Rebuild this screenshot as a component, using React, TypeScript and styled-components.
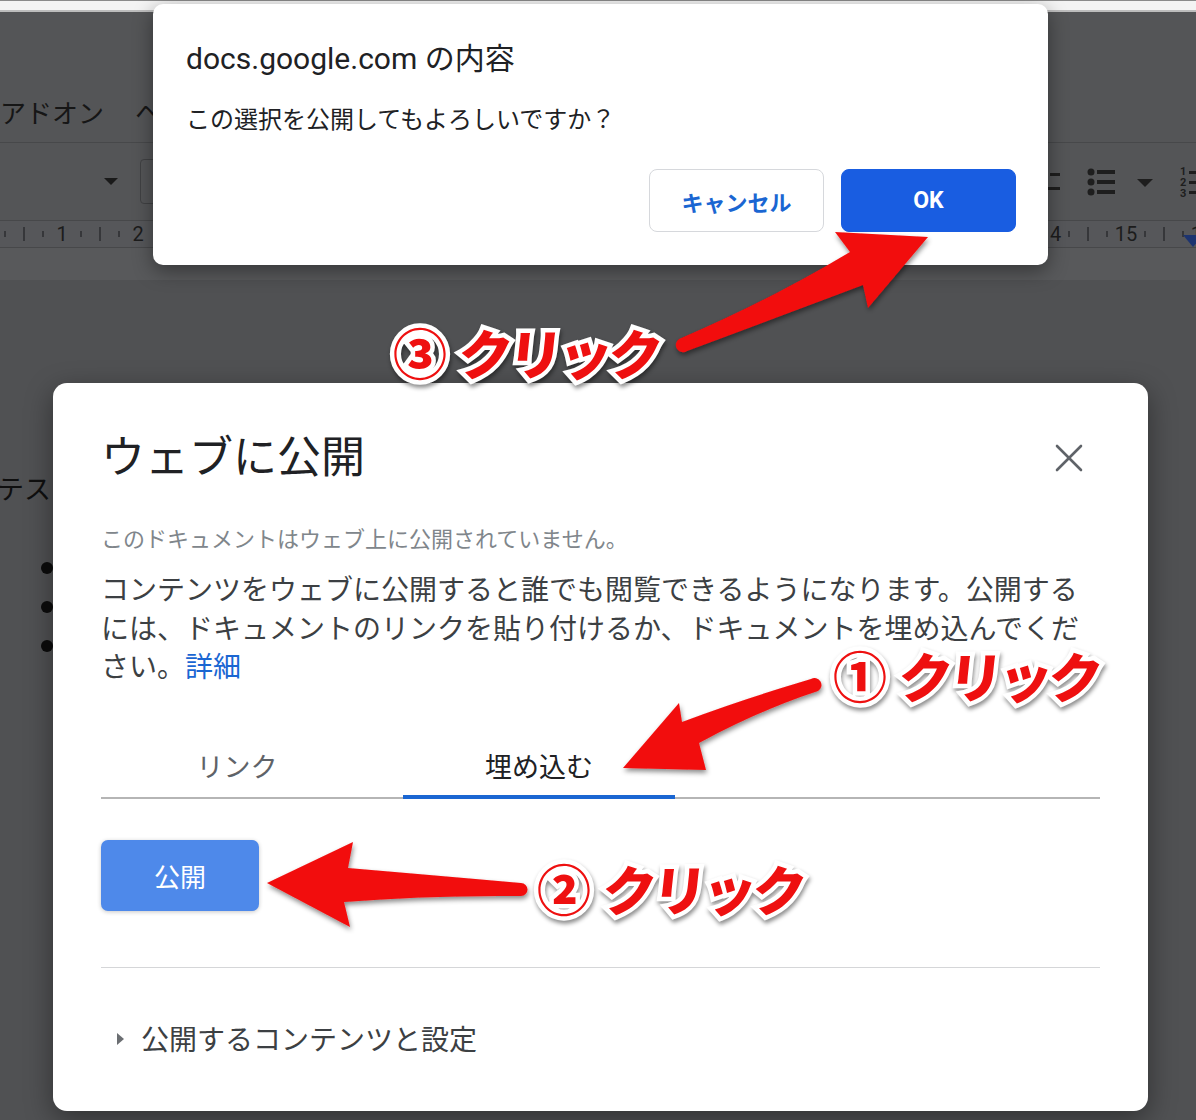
import styled, { createGlobalStyle } from 'styled-components';
import { X } from 'lucide-react';

const JP = `"Noto Sans CJK JP", sans-serif`;
const LATIN = `Roboto, "Noto Sans CJK JP", sans-serif`;

const GlobalStyle = createGlobalStyle`
    html, body {
        margin: 0;
        padding: 0;
        background: #515254;
    }
    body {
        font-family: ${LATIN};
    }
    * {
        box-sizing: border-box;
    }
`;

const Screen = styled.div`
    position: relative;
    width: 1196px;
    height: 1120px;
    overflow: hidden;
    background: #515254;
    display: flex;
    flex-direction: column;
`;

const BrowserStrip = styled.div`
    height: 12px;
    flex-shrink: 0;
    background: #f3f3f3;
    border-top: 1px solid #8a8a8a;
    border-bottom: 2px solid #bdbdbd;
`;

const MenuBar = styled.div`
    height: 130px;
    flex-shrink: 0;
    display: flex;
    align-items: flex-end;
    gap: 31px;
    padding-bottom: 14px;
    background: #545557;
    font-family: ${JP};
    font-size: 26px;
    line-height: 32px;
    color: #161616;
`;

const Toolbar = styled.div`
    height: 78px;
    flex-shrink: 0;
    border-top: 1px solid #47484a;
    background: #545557;
    display: flex;
    align-items: center;
    justify-content: space-between;
`;

const ToolGroup = styled.div`
    display: flex;
    align-items: center;
    gap: 22px;
    padding-left: 104px;
`;

const Caret = styled.span`
    width: 0;
    height: 0;
    border-left: 7px solid transparent;
    border-right: 7px solid transparent;
    border-top: 7px solid #1a1a1a;
`;

const FontBox = styled.div`
    width: 120px;
    height: 45px;
    border: 1.5px solid #404143;
    border-radius: 4px;
`;

const Ruler = styled.div`
    position: relative;
    height: 28px;
    flex-shrink: 0;
    overflow: hidden;
    background: #56575a;
    border-top: 1px solid #47484a;
    border-bottom: 1px solid #47484a;
`;

const RulerTrack = styled.div`
    display: flex;
    height: 100%;
    margin-left: -4.5px;
`;

const RulerCell = styled.div`
    width: 19px;
    flex-shrink: 0;
    display: flex;
    align-items: center;
    justify-content: center;
    font-family: ${LATIN};
    font-size: 20px;
    color: #1c1c1c;
`;

const Tick = styled.span<{ $major?: boolean }>`
    width: 1.5px;
    height: ${(p) => (p.$major ? 14 : 6)}px;
    background: #36373a;
`;

const IndentMarker = styled.span`
    position: absolute;
    right: -7px;
    bottom: 0;
    width: 0;
    height: 0;
    border-left: 10px solid transparent;
    border-right: 10px solid transparent;
    border-top: 12px solid #1d3470;
`;

const RulerGap = styled.div`
    height: 32px;
    flex-shrink: 0;
    background: #58595b;
`;

const Page = styled.div`
    flex: 1;
    background: #505153;
    font-family: ${JP};
    color: #0f0f0f;
`;

const DocText = styled.div`
    margin: 190px 0 0 -3px;
    font-size: 27px;
    line-height: 36px;
`;

const BulletList = styled.ul`
    list-style: none;
    margin: 42px 0 0 41px;
    padding: 0;
`;

const BulletItem = styled.li`
    height: 39px;
    display: flex;
    align-items: center;
`;

const Dot = styled.span`
    width: 12px;
    height: 12px;
    border-radius: 50%;
    background: #0c0c0c;
`;

/* confirm dialog */
const ConfirmDialog = styled.div`
    position: absolute;
    left: 153px;
    top: 4px;
    width: 895px;
    padding: 37px 32px 33px 33px;
    background: #fff;
    border-radius: 10px;
    box-shadow: 0 6px 20px rgba(0, 0, 0, 0.4);
`;

const ConfirmTitle = styled.div`
    font-family: ${LATIN};
    font-size: 30px;
    line-height: 36px;
    color: #202124;
`;

const ConfirmMessage = styled.div`
    margin-top: 25px;
    font-family: ${JP};
    font-size: 24px;
    line-height: 32px;
    color: #202124;
`;

const ConfirmActions = styled.div`
    margin-top: 35px;
    display: flex;
    justify-content: flex-end;
    gap: 17px;
`;

const DialogButton = styled.button<{ $primary?: boolean }>`
    width: 175px;
    height: 63px;
    border-radius: 8px;
    border: 1px solid ${(p) => (p.$primary ? '#195de1' : '#d6d8dc')};
    background: ${(p) => (p.$primary ? '#195de1' : '#fff')};
    color: ${(p) => (p.$primary ? '#fff' : '#1a66d2')};
    font-family: ${LATIN};
    font-size: ${(p) => (p.$primary ? 23 : 22)}px;
    font-weight: 700;
    cursor: pointer;
`;

/* publish dialog */
const PublishDialog = styled.div`
    position: absolute;
    left: 53px;
    top: 383px;
    width: 1095px;
    padding: 40px 48px 50px;
    background: #fff;
    border-radius: 14px;
    box-shadow: 0 8px 28px rgba(0, 0, 0, 0.4);
    font-family: ${JP};
`;

const Header = styled.div`
    height: 70px;
    display: flex;
    align-items: center;
    justify-content: space-between;
`;

const Title = styled.h2`
    margin: -8px 0 0;
    font-size: 44px;
    line-height: 1;
    font-weight: 400;
    color: #202124;
`;

const CloseButton = styled.button`
    width: 48px;
    height: 48px;
    margin-right: 7px;
    padding: 0;
    border: none;
    background: none;
    color: #5f6368;
    display: grid;
    place-items: center;
`;

const Notice = styled.p`
    margin: 31px 0 0;
    font-size: 22px;
    line-height: 26px;
    color: #80868b;
`;

const Body = styled.p`
    margin: 19px 0 0;
    font-size: 28px;
    line-height: 38.5px;
    color: #3c4043;
`;

const Link = styled.a`
    color: #1a66d2;
    text-decoration: none;
`;

const TabBar = styled.div`
    margin-top: 58px;
    display: flex;
    gap: 30px;
    border-bottom: 2px solid #b5b5b5;
`;

const Tab = styled.div<{ $active?: boolean }>`
    width: 272px;
    height: 56px;
    margin-bottom: -2px;
    padding-bottom: 6px;
    display: flex;
    align-items: center;
    justify-content: center;
    font-size: 27px;
    color: ${(p) => (p.$active ? '#202124' : '#5f6368')};
    border-bottom: 4px solid ${(p) => (p.$active ? '#1a66d2' : 'transparent')};
`;

const PublishButton = styled.button`
    margin-top: 41px;
    width: 158px;
    height: 71px;
    border: none;
    border-radius: 7px;
    background: #4e89ea;
    color: #fff;
    font-family: ${JP};
    font-size: 26px;
    box-shadow: 0 1px 4px rgba(0, 0, 0, 0.22);
    display: block;
`;

const Divider = styled.div`
    margin-top: 56px;
    border-top: 1px solid #d5d6d8;
`;

const Expander = styled.div`
    margin-top: 50px;
    margin-bottom: 3px;
    height: 40px;
    display: flex;
    align-items: center;
    gap: 17px;
    padding-left: 16px;
    font-size: 28px;
    color: #3c4043;
`;

const ExpandCaret = styled.span`
    width: 0;
    height: 0;
    margin-top: 3px;
    border-top: 6px solid transparent;
    border-bottom: 6px solid transparent;
    border-left: 7px solid #6b6e72;
`;

/* annotations */
const Arrows = styled.svg`
    position: absolute;
    left: 0;
    top: 0;
    pointer-events: none;
`;

const Callout = styled.div<{ $x: number; $y: number }>`
    position: absolute;
    left: ${(p) => p.$x}px;
    top: ${(p) => p.$y}px;
    display: flex;
    align-items: center;
    gap: 12px;
    font-family: ${JP};
    font-weight: 900;
    font-size: 54px;
    line-height: 60px;
    color: #ee1010;
    -webkit-text-stroke: 9px #fff;
    paint-order: stroke fill;
    filter: drop-shadow(1px 3px 2px rgba(0, 0, 0, 0.45));
    white-space: nowrap;
`;

const CalloutWord = styled.span`
    letter-spacing: -4px;
    transform: skewX(-6deg);
    display: inline-block;
`;

const rulerCells = Array.from({ length: 64 }, (_, i) => i);

function ToolbarIcons() {
    return (
        <svg width="150" height="40" viewBox="0 0 150 40">
            <g fill="#1e1e1e">
                <rect x="4" y="11" width="10" height="3" />
                <rect x="0" y="25" width="14" height="3" />
                <circle cx="45" cy="10" r="3.5" />
                <circle cx="45" cy="20" r="3.5" />
                <circle cx="45" cy="30" r="3.5" />
                <rect x="51" y="8" width="18" height="4" />
                <rect x="51" y="18" width="18" height="4" />
                <rect x="51" y="28" width="18" height="4" />
                <polygon points="91,17 107,17 99,25" />
                <text x="134" y="13" fontSize="11" fontFamily="Roboto, sans-serif" fontWeight="700">1</text>
                <text x="134" y="24" fontSize="11" fontFamily="Roboto, sans-serif" fontWeight="700">2</text>
                <text x="134" y="35" fontSize="11" fontFamily="Roboto, sans-serif" fontWeight="700">3</text>
                <rect x="143" y="9" width="8" height="3" />
                <rect x="143" y="19" width="8" height="3" />
                <rect x="143" y="29" width="8" height="3" />
            </g>
        </svg>
    );
}

export default function App() {
    return (
        <Screen>
            <GlobalStyle />
            <BrowserStrip />
            <MenuBar>
                <span>アドオン</span>
                <span>ヘルプ</span>
            </MenuBar>
            <Toolbar>
                <ToolGroup>
                    <Caret />
                    <FontBox />
                </ToolGroup>
                <ToolbarIcons />
            </Toolbar>
            <Ruler>
                <RulerTrack>
                    {rulerCells.map((i) => (
                        <RulerCell key={i}>
                            {i % 4 === 3 ? (i + 1) / 4 : <Tick $major={i % 4 === 1} />}
                        </RulerCell>
                    ))}
                </RulerTrack>
                <IndentMarker />
            </Ruler>
            <RulerGap />
            <Page>
                <DocText>テスト</DocText>
                <BulletList>
                    <BulletItem><Dot /></BulletItem>
                    <BulletItem><Dot /></BulletItem>
                    <BulletItem><Dot /></BulletItem>
                </BulletList>
            </Page>

            <ConfirmDialog>
                <ConfirmTitle>docs.google.com の内容</ConfirmTitle>
                <ConfirmMessage>この選択を公開してもよろしいですか？</ConfirmMessage>
                <ConfirmActions>
                    <DialogButton>キャンセル</DialogButton>
                    <DialogButton $primary>OK</DialogButton>
                </ConfirmActions>
            </ConfirmDialog>

            <PublishDialog>
                <Header>
                    <Title>ウェブに公開</Title>
                    <CloseButton aria-label="閉じる">
                        <X size={48} strokeWidth={1.3} />
                    </CloseButton>
                </Header>
                <Notice>このドキュメントはウェブ上に公開されていません。</Notice>
                <Body>
                    コンテンツをウェブに公開すると誰でも閲覧できるようになります。公開するには、ドキュメントのリンクを貼り付けるか、ドキュメントを埋め込んでください。<Link href="#">詳細</Link>
                </Body>
                <TabBar>
                    <Tab>リンク</Tab>
                    <Tab $active>埋め込む</Tab>
                </TabBar>
                <PublishButton>公開</PublishButton>
                <Divider />
                <Expander>
                    <ExpandCaret />
                    <span>公開するコンテンツと設定</span>
                </Expander>
            </PublishDialog>

            <Arrows width="1196" height="1120" viewBox="0 0 1196 1120">
                <defs>
                    <filter id="arrowShadow" x="-10%" y="-10%" width="120%" height="130%">
                        <feDropShadow dx="1" dy="3" stdDeviation="2.5" floodColor="#000" floodOpacity="0.45" />
                    </filter>
                </defs>
                <g fill="#f20c0c" filter="url(#arrowShadow)">
                    <path d="M679 339 Q770 300 850 252 L835 232 L928 237 L868 308 L863 285 Q770 320 687 351 A6.5 6.5 0 0 1 679 339 Z" />
                    <path d="M811 679 Q740 700 682 722 L679 703 L623 768 L706 770 L699 743 Q760 710 818 691 A6 6 0 0 0 811 679 Z" />
                    <path d="M521 883 Q430 875 348 868 L353 842 L267 883 L350 927 L344 902 Q430 895 521 896 A6.5 6.5 0 0 0 521 883 Z" />
                </g>
            </Arrows>

            <Callout $x={393} $y={322}>
                <span>③</span>
                <CalloutWord>クリック</CalloutWord>
            </Callout>
            <Callout $x={833} $y={645}>
                <span>①</span>
                <CalloutWord>クリック</CalloutWord>
            </Callout>
            <Callout $x={537} $y={858}>
                <span>②</span>
                <CalloutWord>クリック</CalloutWord>
            </Callout>
        </Screen>
    );
}
